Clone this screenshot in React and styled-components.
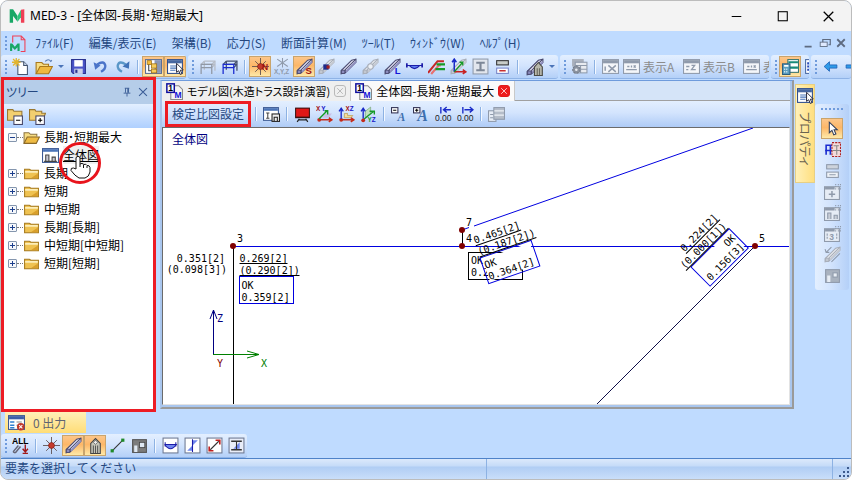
import React, { useState } from "react";
import styled, { createGlobalStyle } from "styled-components";

const gray = "#8f9aab";

const bar = (light, mid, dark) => (
  <>
    <path d="M1 12 L11 2 L15 1 L15 4 L5 14 L1 15 Z" fill={light} stroke={dark} strokeWidth="1" />
    <path d="M5 14 L5 11 L15 1" fill="none" stroke={dark} strokeWidth="1" />
    <path d="M5.6 13 L15 3.5" stroke={mid} strokeWidth="1.6" />
    <rect x="1.5" y="11.5" width="3" height="3" fill={mid} stroke={dark} strokeWidth=".8" />
  </>
);
const steel = bar("#e4e4f4", "#8d8dbd", "#4a4a70");
const faded = bar("#e6e9ee", "#c3c8d1", "#a7adb8");

const frame = (front, back) => (
  <g fill="none" strokeWidth="1.2">
    <path d="M5 3 H15 V12 M5 3 V11" stroke={back} />
    <path d="M2 6 L5 3 M12 6 L15 3 M12 9 L15 6 M5 6 H15" stroke={back} />
    <path d="M2 15 V6 H12 V15 M2 9 H12" stroke={front} />
  </g>
);

const grid = (stroke) => (
  <>
    <rect x=".5" y="1.5" width="15" height="13" fill="#f4f6f9" stroke={stroke} />
    <rect x="1" y="2" width="14" height="3" fill={stroke} />
  </>
);

const node = (
  <>
    <path d="M8 0 V16 M0 8 H16 M3 3 L13 13 M13 3 L3 13" stroke="#5a4a4a" strokeWidth=".8" />
    <circle cx="8" cy="8" r="2.8" fill="#c43a2c" stroke="#7d1a10" strokeWidth=".6" />
  </>
);

const axis = (plane, a, b) => (
  <>
    <path d="M2 13 H14 M12 11 L15 13 L12 15" fill="none" stroke="#c42a1a" strokeWidth="1.3" />
    <circle cx="3" cy="13" r="1.8" fill="#c42a1a" />
    {plane}
    <text x={a[1]} y="5" fontSize="6" fontWeight="700" fill="#a01010">{a[0]}</text>
    <text x={b[1]} y="5" fontSize="6" fontWeight="700" fill="#1414c8">{b[0]}</text>
  </>
);

const icons = {
  newFile: (
    <>
      <path d="M5.5 3.5 H11 L14.5 7 V15.5 H5.5 Z" fill="#fff" stroke="#44556f" />
      <path d="M11 3.5 V7 H14.5" fill="#c8d6ea" stroke="#44556f" />
      <path d="M4 0 V8 M0 4 H8 M1 1 L7 7 M7 1 L1 7" stroke="#e3b52c" strokeWidth="1.2" />
    </>
  ),
  open: (
    <>
      <path d="M1 14 V4 H6 L7.5 5.5 H12 V8" fill="#f7dd83" stroke="#a9791d" />
      <path d="M1 14 L4.5 7.5 H15.5 L12 14 Z" fill="#efb93f" stroke="#a9791d" />
      <path d="M9 3 Q12 0 14 3 L15 2" fill="none" stroke="#5a7db5" />
    </>
  ),
  save: (
    <>
      <path d="M1.5 1.5 H14.5 V14.5 H3 L1.5 13 Z" fill="#4a55c8" stroke="#2a3390" />
      <rect x="4" y="2" width="8" height="6" fill="#fff" />
      <rect x="4" y="10" width="8" height="5" fill="#c9d0ea" />
      <rect x="5" y="11" width="2" height="3" fill="#2a3390" />
    </>
  ),
  undo: (
    <>
      <path d="M5 6 Q11 2 12.5 7 Q13 10.5 8.5 13" fill="none" stroke="#4b74c9" strokeWidth="2.2" />
      <path d="M1.5 4 L3 11 L8 7 Z" fill="#4b74c9" />
    </>
  ),
  redo: (
    <>
      <path d="M11 6 Q5 2 3.5 7 Q3 10.5 7.5 13" fill="none" stroke="#5a97c8" strokeWidth="2.2" />
      <path d="M14.5 3 L14 10 L8 8 Z" fill="#3f72b8" />
    </>
  ),
  treePane: (
    <>
      <rect x=".5" y="1.5" width="15" height="13" fill="#fff" stroke="#5b6f94" />
      <rect x="9" y="2" width="6" height="12" fill="#8a97b5" />
      <path d="M3.5 3 V12 H6" fill="none" stroke="#444" />
      <rect x="2" y="2.5" width="4" height="3.5" fill="#f0b93a" stroke="#9c6c12" strokeWidth=".7" />
      <rect x="6" y="5.5" width="5" height="4" fill="#f5cd5c" stroke="#9c6c12" strokeWidth=".7" />
      <rect x="6" y="10.5" width="5" height="3.5" fill="#f5cd5c" stroke="#9c6c12" strokeWidth=".7" />
    </>
  ),
  propPane: (
    <>
      <rect x=".5" y="1.5" width="14" height="13" fill="#fff" stroke="#2f4f8f" />
      <rect x="1" y="2" width="13" height="3" fill="#47679f" />
      <path d="M3 7.5 H10 M3 9.5 H9 M3 11.5 H8" stroke="#4472b8" />
      <path d="M9 5 L9 13.5 L11 12 L12.5 15.5 L14 14.8 L12.6 11.5 L15.3 11.3 Z" fill="#fff" stroke="#223" strokeWidth=".9" />
    </>
  ),
  frameOff: frame("#9098a5", "#b6bcc6"),
  frameOn: frame("#1a2bd0", "#44506e"),
  nodeN: (
    <>
      {node}
      <text x="9.5" y="11" fontSize="8" fontWeight="700" fill="#a01010">N</text>
    </>
  ),
  node,
  nodeXyz: (
    <>
      <path d="M8 0 V9 M3 1 L13 8 M13 1 L3 8" stroke={gray} />
      <text x="0" y="15" fontSize="6" fontWeight="700" fill={gray}>X,Y,Z</text>
    </>
  ),
  barS: (
    <>
      {steel}
      <text x="9" y="15" fontSize="9" fontWeight="700" fill="#a01010">S</text>
    </>
  ),
  barMid: (
    <>
      {faded}
      <rect x="5" y="6" width="5" height="5" fill="#1c2a8c" />
      <rect x="8" y="7" width="3" height="3" fill="#a02020" />
    </>
  ),
  bar: steel,
  barJoint: (
    <>
      {faded}
      <circle cx="8" cy="8" r="2.6" fill="#edf0f5" stroke="#a7adb8" />
    </>
  ),
  barL: (
    <>
      {steel}
      <text x="10" y="15" fontSize="9" fontWeight="700" fill="#1414d8">L</text>
    </>
  ),
  load: (
    <>
      <path d="M.8 5 V9 M15.2 5 V9" stroke="#1c1ca8" strokeWidth="1.6" />
      <path d="M0 7 H16" stroke="#1c1ca8" />
      <path d="M3 7 Q8 13 13 7 Z" fill="#5c7df0" stroke="#1c1ca8" />
    </>
  ),
  beams: (
    <>
      <path d="M0 14 L9 3 H15" fill="none" stroke="#c82828" strokeWidth="2" />
      <path d="M3 15 L10 7 H12" fill="none" stroke="#e87070" strokeWidth="2" />
      <path d="M8 6 H16 M7 10.5 H16" stroke="#169a28" strokeWidth="2.2" />
    </>
  ),
  localAxis: (
    <>
      {faded}
      <path d="M4 13 V2 M2 4 L4 1 L6 4" fill="none" stroke="#1a2bc8" strokeWidth="1.4" />
      <path d="M4 13 H14 M12 11 L15 13 L12 15" fill="none" stroke="#c82020" strokeWidth="1.4" />
      <path d="M4 13 L12 4 M9 4 H12 V7" fill="none" stroke="#169a28" strokeWidth="1.2" />
    </>
  ),
  section: (
    <>
      <rect x="1" y="1" width="14" height="14" fill="#e2e6ed" stroke={gray} />
      <path d="M4 4.5 H12 M4 11.5 H12 M8 4.5 V11.5" stroke="#7d8797" strokeWidth="2" />
    </>
  ),
  plates: (
    <>
      <rect x="2.5" y="2.5" width="11" height="4" fill="#c8ccc8" stroke="#333" />
      <rect x="2.5" y="9.5" width="11" height="5" fill="#fff" stroke="#7885c8" />
      <path d="M5 12 H11" stroke="#c83030" strokeWidth="1.2" />
    </>
  ),
  platesOff: (
    <>
      <rect x="2.5" y="2.5" width="11" height="4" fill="#cdd3dc" stroke={gray} />
      <rect x="2.5" y="9.5" width="11" height="5" fill="#eef2f7" stroke={gray} />
      <path d="M5 12 H11" stroke={gray} />
    </>
  ),
  barWall: (
    <>
      {steel}
      <path d="M7.5 15.5 V8 L11 4 L14.5 8 V15.5 Z" fill="#b8b8ac" stroke="#4a4a44" />
      <path d="M10 15 V9 M12 15 V9" stroke="#6a6a60" />
    </>
  ),
  gearGrid: (
    <>
      <rect x="1" y="1" width="11" height="7" fill="#a9b0bc" />
      <rect x="4" y="4" width="11" height="10" fill="#e8ebf0" stroke={gray} />
      <path d="M4 7 H15 M9 7 V14 M4 10.5 H15" stroke={gray} />
      <circle cx="5" cy="11" r="3.4" fill="#8b93a0" stroke="#737b89" strokeDasharray="2 1" />
      <circle cx="5" cy="11" r="1.2" fill="#e8ebf0" />
    </>
  ),
  gridX: (
    <>
      {grid(gray)}
      <path d="M3 8 V12 M6 7 L13 13 M13 7 L6 13" stroke={gray} strokeWidth="1.4" />
    </>
  ),
  gridA: (
    <>
      {grid(gray)}
      <path d="M3 11 H13 M4 8 H6 M8 7 V9 M10 7 L12 9 M12 7 L10 9" stroke={gray} strokeWidth="1.2" />
    </>
  ),
  gridB: (
    <>
      {grid(gray)}
      <path d="M3 8 H6 M8 7 H11 L8 11 H12 M3 11 H5" fill="none" stroke={gray} strokeWidth="1.2" />
    </>
  ),
  calc: (
    <>
      <rect x="5.5" y="1.5" width="10" height="12" fill="#fff" stroke="#38756e" />
      <path d="M6 4 H15 M6 9 H15" stroke="#188a78" strokeWidth="2" />
      <rect x=".5" y="5.5" width="7" height="10" fill="#5c9fc0" stroke="#2c5e80" />
      <path d="M2 7.5 H6" stroke="#fff" strokeWidth="1.6" />
      <path d="M2 10.5 H6 M2 13 H6" stroke="#e0f0f8" strokeDasharray="1 1" strokeWidth="1.4" />
    </>
  ),
  sheet: (
    <>
      <rect x="1.5" y="1.5" width="13" height="13" fill="#fff" stroke="#4b6ba5" />
      <path d="M4 4 V13" stroke="#2a49b8" strokeWidth="2" strokeDasharray="2 1" />
    </>
  ),
  back: <path d="M2 8 L7 3.5 V6.5 H14 V9.500 H7 V12.500 Z" fill="#2f9be8" stroke="#1b62b8" strokeWidth=".8" />,
  forward: <path d="M14 8 L9 3.5 V6.5 H2 V9.500 H9 V12.500 Z" fill="#2f9be8" stroke="#1b62b8" strokeWidth=".8" />,
  folder: (
    <>
      <path d="M1.5 13 V4 H6 L7.5 5 H14.5 V13 Z" fill="#efc251" stroke="#a67a1c" />
      <path d="M2 6.5 H14" stroke="#fdeeb8" strokeWidth="1.6" />
      <path d="M8 12 L14 8 V12.5 H8 Z" fill="#d99f2c" />
    </>
  ),
  folderOpen: (
    <>
      <path d="M1 13.5 V3.5 H5.5 L7 5 H13 V7" fill="#f7dd83" stroke="#8c7440" />
      <path d="M1 13.5 L4 7.5 H15.5 L12.5 13.5 Z" fill="#eebb44" stroke="#8c6a28" />
    </>
  ),
  collapse: (
    <>
      <path d="M.5 11.5 V1.5 H5.5 L6.5 3 H14 V11.5 Z" fill="#f2cf70" stroke="#9a7830" />
      <rect x="6.5" y="7.5" width="8" height="8" fill="#fff" stroke="#446" />
      <path d="M8.5 11.5 H12.5" stroke="#000" />
    </>
  ),
  expand: (
    <>
      <path d="M.5 11.5 V1.5 H5.5 L6.5 3 H12 V5 H15.5 L13 11.5 Z" fill="#f2cf70" stroke="#9a7830" />
      <rect x="6.5" y="7.5" width="8" height="8" fill="#fff" stroke="#446" />
      <path d="M8.5 11.5 H12.5 M10.5 9.5 V13.5" stroke="#000" />
    </>
  ),
  chart: (
    <>
      <rect x=".5" y="1.5" width="15" height="13" fill="#fff" stroke="#3c5a94" />
      <rect x="1" y="2" width="14" height="2.5" fill="#4b74b8" />
      <path d="M3.5 13 V7.5 H6.5 V13 M9.5 13 V9.5 H12.5 V13 M2 13.5 H14" fill="#c8c8d4" stroke="#444" />
    </>
  ),
  chartOff: (
    <>
      <rect x=".5" y="3.5" width="14" height="12" fill="#e6ecf5" stroke={gray} />
      <path d="M1 5 H10" stroke={gray} strokeWidth="2.4" />
      <path d="M11 1 V6 M13.5 1 V6 M15.5 1 V6" stroke={gray} strokeDasharray="1 1" />
      <path d="M3.5 14 V8.5 H6.5 V14 M9.5 14 V10.5 H12.5 V14" fill="#c8cdd6" stroke={gray} />
    </>
  ),
  addOff: (
    <>
      <rect x=".5" y="3.5" width="14" height="12" fill="#e6ecf5" stroke={gray} />
      <path d="M1 5 H10" stroke={gray} strokeWidth="2.4" />
      <path d="M11 1 V6 M13.5 1 V6 M15.5 1 V6" stroke={gray} strokeDasharray="1 1" />
      <path d="M7.5 7.5 V13.5 M4.5 10.5 H10.5" stroke={gray} strokeWidth="1.4" />
    </>
  ),
  numOff: (
    <>
      <rect x=".5" y="3.5" width="14" height="12" fill="#e6ecf5" stroke={gray} />
      <path d="M1 5 H10" stroke={gray} strokeWidth="2.4" />
      <path d="M11 1 V6 M13.5 1 V6 M15.5 1 V6" stroke={gray} strokeDasharray="1 1" />
      <text x="5" y="14" fontSize="8" fontWeight="700" fill={gray}>3</text>
      <path d="M3 8 V14 M12 8 V14" stroke={gray} strokeDasharray="2 1" />
    </>
  ),
  barsOff: (
    <>
      {faded}
      <path d="M7 15 L15 7 M2 6 L7 1 M1 3 L2 6 L5 6" fill="none" stroke={gray} />
    </>
  ),
  wallOff: (
    <>
      <rect x="1.5" y="2.5" width="13" height="12" fill="#a9b2bf" stroke={gray} />
      <rect x="8.5" y="5.5" width="4" height="4" fill="#e8edf4" stroke={gray} />
      <path d="M3 14 V8 H6 V14" fill="#e8edf4" />
    </>
  ),
  wall: (
    <>
      <rect x="1.5" y="2.5" width="13" height="12" fill="#7c7c7c" stroke="#555" />
      <rect x="8" y="5" width="5" height="5" fill="#dfe8f2" stroke="#444" strokeWidth=".8" />
      <path d="M3 14 V8 H6 V14" fill="#dfe8f2" />
    </>
  ),
  viewSet: (
    <>
      <rect x=".5" y="1.5" width="14" height="12" fill="#fff" stroke="#3c5a94" />
      <rect x="1" y="2" width="13" height="2.5" fill="#4b74b8" />
      <path d="M4.5 6 V12 M3 6.5 H6 M3 11.5 H6" stroke="#444" />
      <rect x="8.5" y="7.5" width="7" height="7" fill="#eee" stroke="#222" />
      <path d="M10.5 14 V10.5 H13.5 V14" fill="none" stroke="#222" />
    </>
  ),
  monitor: (
    <>
      <rect x="1" y="1.5" width="14" height="10" fill="#3a1010" />
      <rect x="2" y="2.5" width="12" height="7.5" fill="#e01818" />
      <path d="M5 12 L3 15 M11 12 L13 15 M4 13 H12" stroke="#222" strokeWidth="1.2" />
    </>
  ),
  axisXy: axis(
    <>
      <path d="M6 11 L9 7 H15 L12 11 Z" fill="#c9bfe8" />
      <path d="M3 12 L10 5 M8 4.5 H11 V8" fill="none" stroke="#169a28" strokeWidth="1.3" />
    </>,
    ["X", 0],
    ["Y", 5]
  ),
  axisXz: axis(
    <>
      <path d="M6 11 V7 H9 V9 H14 L12 11 Z" fill="#f3dc9c" stroke="#b8933c" strokeWidth=".6" />
      <path d="M3 12 V3 M1 5 L3 2 L5 5" fill="none" stroke="#1a2bc8" strokeWidth="1.3" />
    </>,
    ["X", 7],
    ["Z", 11]
  ),
  axisYz: (
    <>
      <path d="M5 11 V5 L10 1 V7 Z" fill="#bfe0bf" stroke="#70a070" strokeWidth=".6" />
      <path d="M3 12 V3 M1 5 L3 2 L5 5" fill="none" stroke="#1a2bc8" strokeWidth="1.3" />
      <path d="M3 13 L13 5 M9 5 H13.5 V8" fill="none" stroke="#169a28" strokeWidth="1.3" />
      <circle cx="3" cy="13.5" r="1.8" fill="#c42a1a" />
      <text x="7" y="15" fontSize="6" fontWeight="700" fill="#169a28">Y</text>
      <text x="11" y="15" fontSize="6" fontWeight="700" fill="#1414c8">Z</text>
    </>
  ),
  fontDown: (
    <>
      <text x="6" y="14" fontSize="11" fontWeight="700" fontStyle="italic" fontFamily="Liberation Serif, serif" fill="#3e6fae">A</text>
      <rect x=".5" y="1.5" width="6" height="5" fill="#fff" stroke="#335" />
      <path d="M2 4 H5" stroke="#000" />
    </>
  ),
  fontUp: (
    <>
      <text x="4" y="14" fontSize="15" fontWeight="700" fontStyle="italic" fontFamily="Liberation Serif, serif" fill="#3e6fae">A</text>
      <rect x=".5" y="1.5" width="6" height="5" fill="#fff" stroke="#335" />
      <path d="M2 4 H5 M3.5 2.5 V5.5" stroke="#000" />
    </>
  ),
  digitsLess: (
    <>
      <path d="M5.5 1 V7 M8 3.5 H15 M11 1 L8 3.5 L11 6" fill="none" stroke="#1a2bc8" strokeWidth="1.3" />
      <text x="0" y="14" fontSize="8" fill="#222">0.00</text>
    </>
  ),
  digitsMore: (
    <>
      <path d="M5.5 1 V7 M7 3.5 H15 M12 1 L15 3.5 L12 6" fill="none" stroke="#1a2bc8" strokeWidth="1.3" />
      <text x="0" y="14" fontSize="8" fill="#222">0.00</text>
    </>
  ),
  listOff: (
    <>
      <rect x=".5" y="4.5" width="7" height="10" fill="#e6ecf5" stroke={gray} />
      <rect x="5.5" y="1.5" width="10" height="11" fill="#b5bdc9" stroke={gray} />
      <path d="M6 4.5 H15 M6 8.5 H15" stroke="#edf1f6" strokeWidth="1.2" />
      <path d="M2 8 H5 M2 11 H5" stroke={gray} />
    </>
  ),
  pointer: (
    <path d="M5 2 V12 L7.5 9.8 L9.2 14 L11.2 13.200 L9.500 9.200 H12.500 Z" fill="#fff" stroke="#33405c" />
  ),
  selectFrame: (
    <>
      <path d="M2 13 V4 H9 M1 9 H9 M6 4 V13" fill="none" stroke="#1a2bd0" strokeWidth="1.5" />
      <rect x="7.5" y="1.5" width="8" height="13" fill="#f3dada" stroke="#b02020" strokeDasharray="2 1" />
      <path d="M8 9 H15 M9 4.5 H14 M12 4 V13" stroke="#888" />
    </>
  ),
  output: (
    <>
      <rect x=".5" y="1.5" width="15" height="13" fill="#fff" stroke="#3c5a94" />
      <rect x="1" y="2" width="14" height="3" fill="#3c5fa8" />
      <path d="M2 7.5 H6 M2 10.5 H6 M2 13 H6" stroke="#2f7fd0" strokeWidth="1.4" />
      <path d="M8 7.5 H13 M8 10.5 H13" stroke="#888" />
      <circle cx="12" cy="12" r="3.6" fill="#c0392b" />
      <path d="M10.5 10.5 L13.5 13.5 M13.5 10.5 L10.5 13.5" stroke="#fff" />
    </>
  ),
  all: (
    <>
      <text x="0" y="7" fontSize="8" fontWeight="700" fill="#000">ALL</text>
      <path d="M1 14 L6 8 M3 15 L8 9 M1 14 L3 15" stroke="#667" strokeWidth="1.4" />
      <path d="M12.5 7 V14 M10 11 L12.5 14 L15 11 M10 15.5 H15" fill="none" stroke="#a01818" strokeWidth="1.3" />
    </>
  ),
  house: (
    <>
      <path d="M3.5 15.5 V6 L8 1.5 L12.5 6 V15.5 Z" fill="#c4c4b8" stroke="#444" />
      <path d="M6 15 V8 M8 15 V8 M10 15 V8" stroke="#555" />
      <path d="M8 3 L10 5 L8 7 L6 5 Z" fill="#eee" stroke="#555" strokeWidth=".7" />
    </>
  ),
  line: (
    <>
      <path d="M3 13 L13 3" stroke="#333" />
      <rect x="1.5" y="11.5" width="3" height="3" fill="#1f8a2a" />
      <rect x="11.5" y="1.5" width="3" height="3" fill="#1f8a2a" />
    </>
  ),
  moment: (
    <>
      <rect x="1" y="1" width="14" height="14" fill="#fff" stroke="#6f7a94" />
      <path d="M3 5 V9 M13 5 V9" stroke="#1c1ca8" />
      <path d="M2.5 7 H13.5 Q8 15 2.5 7" fill="#6f86ee" stroke="#1c1ca8" />
    </>
  ),
  shear: (
    <>
      <rect x="1" y="1" width="14" height="14" fill="#fff" stroke="#6f7a94" />
      <path d="M8 3 H13 L8 8 Z M8 8 L3 13 H8 Z" fill="#6f86ee" />
      <path d="M8 2 V14" stroke="#1c1ca8" />
    </>
  ),
  axial: (
    <>
      <rect x="1" y="1" width="14" height="14" fill="#fff" stroke="#6f7a94" />
      <path d="M4 12 L12 4" stroke="#333" />
      <path d="M3 9 V13 H7 M13 7 V3 H9" fill="none" stroke="#c02020" strokeWidth="1.5" />
    </>
  ),
  steelBox: (
    <>
      <rect x="1" y="1" width="14" height="14" fill="#e9edf8" stroke="#6f7a94" />
      <path d="M3 4 H13 M3 12 H13" stroke="#333" strokeWidth="1.6" />
      <path d="M11 5 L5 11 H11 Z" fill="#6f86ee" />
      <path d="M8 4 V12" stroke="#333" />
    </>
  ),
  appLogo: (
    <>
      <path d="M1.5 2 H4.5 L8.5 8 V13 L4.5 8 V14 H1.5 Z" fill="#17a765" />
      <path d="M8.5 8 L11.5 2.500 V9 L8.5 13 Z" fill="#2bc47c" />
      <path d="M11.5 2.500 L14.5 2 V14 H11.5 Z" fill="#ef3f55" />
    </>
  ),
  docLogo: (
    <>
      <path d="M3.5 7 V1 H11.5 L15 4.5 V15.5 H11" fill="none" stroke="#ef3f55" />
      <path d="M11.5 1 V4.5 H15" fill="none" stroke="#ef3f55" />
      <path d="M1 8 H3 L5.5 11 L8 8 H10 V15 H8 V11.5 L5.5 14 L3 11.5 V15 H1 Z" fill="#17a765" />
    </>
  ),
  docTab: (
    <>
      <path d="M4.5 2.5 H12 L15.5 6 V15.5 H4.5 Z" fill="#f4f4f4" stroke="#888" />
      <rect x="0.8" y=".8" width="7" height="8" fill="#fff" stroke="#10109c" strokeWidth="1.4" />
      <text x="2" y="7.6" fontSize="8" fontWeight="700" fill="#000">1</text>
      <text x="8" y="14.500" fontSize="8" fontWeight="700" fill="#1414d8">M</text>
    </>
  ),
  pin: <path d="M5 3 H11 M6 3 V9 M10 3 V9 M9 3 V9 M3.5 9.5 H12.5 M8 9.5 V14" stroke="#3a5c96" strokeWidth="1.2" />,
  cross: <path d="M3.5 3.5 L12.5 12.5 M12.5 3.5 L3.5 12.5" stroke="currentColor" strokeWidth="1.2" />,
  minimize: <path d="M3.500 8 H12.500" stroke="currentColor" />,
  maximize: <rect x="4" y="3.5" width="8.500" height="8.500" fill="none" stroke="currentColor" />,
  mdiMin: <path d="M3 12 H11" stroke="#5e6b80" strokeWidth="2" />,
  mdiRestore: (
    <>
      <path d="M5.5 8 V4 H14 V10 H12" fill="none" stroke="#5e6b80" strokeWidth="1.4" />
      <rect x="2.5" y="7" width="8" height="5" fill="#dfeaff" stroke="#5e6b80" />
    </>
  ),
  mdiClose: <path d="M3 3 L13 13 M13 3 L3 13" stroke="#5e6b80" strokeWidth="2.4" />,
};

function Icon({ name, size = 17 }) {
  return (
    <IconSvg width={size} height={size} viewBox="0 0 16 16" aria-hidden="true">
      {icons[name]}
    </IconSvg>
  );
}

// "|" is a separator, a leading "*" marks a pressed button
function Tools({ items }) {
  return items.map((item, i) => {
    if (item === "|") return <Separator key={i} />;
    const on = item.startsWith("*");
    const name = on ? item.slice(1) : item;
    return (
      <ToolButton key={i} type="button" aria-label={name} aria-pressed={on} $on={on}>
        <Icon name={name} />
      </ToolButton>
    );
  });
}

function DropTool({ name }) {
  return (
    <DropButton type="button" aria-label={name}>
      <Icon name={name} size={18} />
      <Caret />
    </DropButton>
  );
}

const menus = [
  "ﾌｧｲﾙ(F)",
  "編集/表示(E)",
  "架構(B)",
  "応力(S)",
  "断面計算(M)",
  "ﾂｰﾙ(T)",
  "ｳｨﾝﾄﾞｳ(W)",
  "ﾍﾙﾌﾟ(H)",
];

const closedFolders = ["長期", "短期", "中短期", "長期[長期]", "中短期[中短期]", "短期[短期]"];

// Ratios of one member end, drawn along the member direction
function RatioLabel({ x, y, angle = 0, bending, shear, total, end, line = "#0000e0" }) {
  const at = end ? 54 : 0;
  const anchor = end ? "end" : "start";
  return (
    <g transform={`translate(${x} ${y}) rotate(${angle})`}>
      <rect x="2" y="2" width="50" height="23" fill="#fff" />
      <rect x="0" y="0" width="54" height="27" fill="none" stroke={line} />
      <text x={at} y="-15" textAnchor={anchor}>{bending}</text>
      <text x={at} y="-3" textAnchor={anchor}>{shear}</text>
      <path d={end ? "M6 -13 H54 M-6 -1 H54" : "M0 -13 H48 M0 -1 H60"} stroke="#000" />
      <text x={end ? 52 : 2} y="12" textAnchor={anchor}>OK</text>
      <text x={end ? 52 : 2} y="24" textAnchor={anchor}>{total}</text>
    </g>
  );
}

function Node({ x, y, label, dx = 4, dy = -4 }) {
  return (
    <>
      <circle cx={x} cy={y} r="3" fill="#800000" />
      <text x={x + dx} y={y + dy}>{label}</text>
    </>
  );
}

function Diagram() {
  return (
    <Drawing>
      <text className="title" x="9" y="16">全体図</text>
      <path d="M70 118.5 H4000" stroke="#0000e0" />
      <path d="M70.5 118 V2000" stroke="#000" />
      <path d="M299.5 102 V118" stroke="#000" />
      <path d="M299 102 L306 99.5 M311 98 L590 0" stroke="#0000e0" />
      <path d="M592 118 L434 276 L234 476" stroke="#101048" />

      <rect x="305.5" y="124.5" width="54" height="27" fill="none" stroke="#000" />
      <text x="308" y="136">OK</text>
      <text x="308" y="148">0.2</text>

      <text x="62" y="134" textAnchor="end">0.351[2]</text>
      <text x="64" y="145" textAnchor="end">(0.098[3])</text>
      <RatioLabel x={76.5} y={148.5} bending="0.269[2]" shear="(0.290[2])" total="0.359[2]" />
      <RatioLabel x={317} y={130} angle={-19} bending="0.465[2]" shear="(0.187[2])" total="0.364[2]" />
      <RatioLabel x={528} y={139} angle={-45} bending="0.224[2]" shear="(0.000[1])" total="0.156[3]" end />

      <Node x={70} y={118} label="3" />
      <Node x={299} y={102} label="7" />
      <Node x={299} y={118} label="4" />
      <Node x={592} y={118} label="5" />

      <g fill="none">
        <path d="M50.5 226 V182 M47 191 L50.5 182 L54 191" stroke="#000080" />
        <path d="M50 226.5 H96 M84 223 L96 226.5 L84 230" stroke="#008000" />
      </g>
      <text x="54" y="194" fill="#000080">Z</text>
      <text x="54" y="239" fill="#800000">Y</text>
      <text x="98" y="239" fill="#008000">X</text>
    </Drawing>
  );
}

function TreePanel() {
  const [open, setOpen] = useState(true);
  return (
    <Panel>
      <PanelHeader>
        <h2>ツリー</h2>
        <PlainButton type="button" aria-label="pin"><Icon name="pin" size={12} /></PlainButton>
        <PlainButton type="button" aria-label="close"><Icon name="cross" size={14} /></PlainButton>
      </PanelHeader>
      <PanelTools>
        <Tools items={["collapse", "expand"]} />
      </PanelTools>
      <TreeList>
        <TreeRow>
          <Expander type="button" aria-label="toggle" $open={open} onClick={() => setOpen(!open)} />
          <Dots />
          <Icon name="folderOpen" />
          <span>長期･短期最大</span>
        </TreeRow>
        {open && (
          <TreeRow $child>
            <Icon name="chart" />
            <Selected>
              全体図
              <Pointer width="46" height="46" viewBox="0 0 46 46" aria-hidden="true">
                <circle cx="23" cy="23" r="19.5" fill="none" stroke="#e8141c" strokeWidth="3" />
                <path
                  d="M19 29 V17.500 Q21 15 23 17.500 V24 Q25 22.500 27 24.500 Q29 23.500 30 25.500 Q32.500 25 33 27.500 V32 Q32 37 28 38 H22 Q18 36 14 30.500 Q13.500 27.500 16.500 28 Z"
                  fill="#fff"
                  stroke="#111"
                />
                <path d="M23 24 V27 M26.500 25 V28 M30 26 V28" stroke="#111" />
              </Pointer>
            </Selected>
          </TreeRow>
        )}
        {closedFolders.map((name) => (
          <TreeRow key={name}>
            <Expander type="button" aria-label="toggle" />
            <Dots />
            <Icon name="folder" />
            <span>{name}</span>
          </TreeRow>
        ))}
      </TreeList>
    </Panel>
  );
}

export default function App() {
  return (
    <Window>
      <GlobalStyle />
      <TitleBar>
        <Icon name="appLogo" size={18} />
        <h1>MED-3 - [全体図-長期･短期最大]</h1>
        <CaptionButton type="button" aria-label="minimize"><Icon name="minimize" /></CaptionButton>
        <CaptionButton type="button" aria-label="maximize"><Icon name="maximize" /></CaptionButton>
        <CaptionButton type="button" aria-label="close"><Icon name="cross" /></CaptionButton>
      </TitleBar>

      <MenuBar>
        <Grip />
        <Icon name="docLogo" />
        <MenuItems>
          {menus.map((label) => (
            <MenuButton key={label} type="button">{label}</MenuButton>
          ))}
        </MenuItems>
        <PlainButton type="button" aria-label="minimize document"><Icon name="mdiMin" size={14} /></PlainButton>
        <PlainButton type="button" aria-label="restore document"><Icon name="mdiRestore" size={14} /></PlainButton>
        <PlainButton type="button" aria-label="close document"><Icon name="mdiClose" size={12} /></PlainButton>
      </MenuBar>

      <ToolRow>
        <ToolBar>
          <Grip />
          <Tools items={["newFile"]} />
          <DropTool name="open" />
          <Tools items={["save", "undo", "redo", "|", "*treePane", "*propPane"]} />
        </ToolBar>
        <ToolBar>
          <Grip />
          <Tools
            items={[
              "frameOff", "frameOn", "|", "*nodeN", "nodeXyz", "*barS", "barMid", "bar", "barJoint",
              "barL", "load", "beams", "localAxis", "section", "plates", "|",
            ]}
          />
          <DropTool name="barWall" />
        </ToolBar>
        <ToolBar $grow>
          <Grip />
          <Tools items={["gearGrid", "|", "gridX"]} />
          <LabelButton type="button" disabled><Icon name="gridA" />表示A</LabelButton>
          <LabelButton type="button" disabled><Icon name="gridB" />表示B</LabelButton>
          <LabelButton type="button" disabled><Icon name="gridA" />表</LabelButton>
        </ToolBar>
        <ToolBar $width={38}>
          <Grip />
          <Tools items={["*calc", "sheet"]} />
        </ToolBar>
        <ToolBar $width={40}>
          <Grip />
          <Tools items={["back", "forward"]} />
        </ToolBar>
      </ToolRow>

      <Workspace>
        <TreePanel />
        <Document>
          <Tabs>
            <Tab $compact>
              <Icon name="docTab" />
              <span>モデル図(木造トラス設計演習)</span>
              <TabClose type="button" aria-label="close tab"><Icon name="cross" size={10} /></TabClose>
            </Tab>
            <Tab $active>
              <Icon name="docTab" />
              <span>全体図-長期･短期最大</span>
              <TabClose type="button" aria-label="close tab" $active><Icon name="cross" size={10} /></TabClose>
            </Tab>
          </Tabs>
          <DocTools>
            <SettingButton type="button">検定比図設定</SettingButton>
            <Tools
              items={[
                "|", "viewSet", "|", "monitor", "axisXy", "axisXz", "axisYz", "|",
                "fontDown", "fontUp", "digitsLess", "digitsMore", "|", "listOff",
              ]}
            />
          </DocTools>
          <Canvas>
            <Diagram />
          </Canvas>
        </Document>
        <RightSide>
          <SideTab type="button">
            <Icon name="propPane" />
            <span>プロパティ</span>
          </SideTab>
          <SideTools>
            <SideGrip />
            <Tools
              items={[
                "*pointer", "selectFrame", "platesOff", "addOff", "chartOff", "numOff", "barsOff", "wallOff",
              ]}
            />
          </SideTools>
        </RightSide>
      </Workspace>

      <OutputTab type="button">
        <Icon name="output" />
        <span>0 出力</span>
      </OutputTab>

      <ToolRow>
        <ToolBar>
          <Grip />
          <Tools
            items={["all", "|", "node", "*bar", "*house", "line", "wall", "|", "moment", "shear", "axial", "steelBox"]}
          />
        </ToolBar>
      </ToolRow>

      <StatusBar>
        <p>要素を選択してください</p>
        <p />
        <SizeGrip width="12" height="12" viewBox="0 0 12 12" aria-hidden="true">
          <path
            d="M8 0 H10 V2 H8 Z M4 4 H6 V6 H4 Z M8 4 H10 V6 H8 Z M0 8 H2 V10 H0 Z M4 8 H6 V10 H4 Z M8 8 H10 V10 H8 Z"
            fill="#3d5a8c"
          />
        </SizeGrip>
      </StatusBar>
    </Window>
  );
}

const GlobalStyle = createGlobalStyle`
  * {
    box-sizing: border-box;
  }
  body {
    margin: 0;
    background: #fff;
    font-family: "Noto Sans CJK JP", sans-serif;
    font-size: 12px;
    line-height: 18px;
  }
  h1, h2, p, ul {
    margin: 0;
    padding: 0;
    font-size: 12px;
    font-weight: 400;
  }
  button {
    margin: 0;
    padding: 0;
    border: 0;
    background: none;
    color: inherit;
    font: inherit;
    white-space: nowrap;
  }
`;

const IconSvg = styled.svg`
  display: block;
  flex: none;
  font-family: "Liberation Sans", sans-serif;
`;

const Window = styled.div`
  display: flex;
  flex-direction: column;
  min-height: 100vh;
  border: 1px solid #bcbcbc;
  border-radius: 8px;
  overflow: hidden;
  background: #bfdbff;
`;

const TitleBar = styled.header`
  display: flex;
  align-items: center;
  height: 30px;
  padding-left: 7px;
  background: #f3f3f3;
  color: #000;
  h1 {
    flex: 1;
    margin-left: 4px;
    font-family: "Noto Sans", "Noto Sans CJK JP", sans-serif;
  }
`;

const CaptionButton = styled.button`
  display: flex;
  align-items: center;
  justify-content: center;
  width: 46px;
  height: 30px;
`;

const PlainButton = styled.button`
  display: flex;
  align-items: center;
  justify-content: center;
  width: 16px;
  height: 16px;
  color: #3a5c96;
`;

const MenuBar = styled.nav`
  display: flex;
  align-items: center;
  height: 24px;
  padding-right: 2px;
  background: #bfdbff;
`;

const MenuItems = styled.div`
  display: flex;
  flex: 1;
  margin-left: 2px;
`;

const MenuButton = styled.button`
  padding: 0 8px 0 7px;
  color: #24477f;
`;

const ToolRow = styled.div`
  display: flex;
  gap: 2px;
`;

const ToolBar = styled.div`
  display: flex;
  align-items: center;
  flex: ${({ $grow, $width }) => ($grow ? "1 1 0" : `0 0 ${$width ? `${$width}px` : "auto"}`)};
  min-width: 0;
  height: 24px;
  overflow: hidden;
  border-bottom: 1px solid #8fb3e6;
  border-radius: 3px;
  background: linear-gradient(#e3efff, #d3e4fd 45%, #b4d0f8);
`;

const Grip = styled.span`
  flex: none;
  width: 2px;
  height: 14px;
  margin: 0 2px 0 4px;
  background: repeating-linear-gradient(#6f9bdc 0 2px, transparent 2px 4px);
`;

const Separator = styled.span`
  flex: none;
  width: 1px;
  height: 14px;
  margin: 0 4px;
  background: #8db2e3;
  box-shadow: 1px 0 #f3f8ff;
`;

const ToolButton = styled.button`
  display: flex;
  flex: none;
  align-items: center;
  justify-content: center;
  width: 22px;
  height: 21px;
  border: 1px solid ${({ $on }) => ($on ? "#c9a46c" : "transparent")};
  background: ${({ $on }) => ($on ? "linear-gradient(#fcc68a, #fdb768 45%, #fee9a8)" : "none")};
`;

const DropButton = styled.button`
  display: flex;
  flex: none;
  align-items: center;
  justify-content: center;
  gap: 5px;
  width: 36px;
  height: 21px;
`;

const Caret = styled.span`
  border: 3px solid transparent;
  border-top-color: #4b74b8;
  border-bottom: 0;
`;

const LabelButton = styled.button`
  display: flex;
  flex: none;
  align-items: center;
  gap: 3px;
  width: 60px;
  padding-left: 2px;
  color: #8c8c8c;
`;

const Workspace = styled.main`
  display: flex;
  flex: 1;
`;

const Panel = styled.aside`
  position: relative;
  z-index: 1;
  display: flex;
  flex-direction: column;
  flex: none;
  width: 155px;
  margin-top: -2px;
  border: 3px solid #ed1c24;
  background: #fff;
`;

const PanelHeader = styled.div`
  display: flex;
  align-items: center;
  height: 24px;
  padding: 0 2px;
  background: #b5cde9;
  color: #24477f;
  h2 {
    flex: 1;
    font-feature-settings: "palt";
  }
`;

const PanelTools = styled.div`
  display: flex;
  align-items: center;
  height: 24px;
  background: linear-gradient(#e3efff, #afd0ff);
`;

const TreeList = styled.ul`
  list-style: none;
`;

const TreeRow = styled.li`
  display: flex;
  align-items: center;
  height: 18px;
  padding-left: ${({ $child }) => ($child ? "38px" : "4px")};
  color: #000;
  white-space: nowrap;
  span {
    margin-left: 4px;
  }
`;

const Expander = styled.button`
  flex: none;
  width: 9px;
  height: 9px;
  border: 1px solid #8496ae;
  border-radius: 1px;
  background:
    linear-gradient(#1c3f8c, #1c3f8c) center / 5px 1px no-repeat,
    linear-gradient(#1c3f8c, #1c3f8c) center / ${({ $open }) => ($open ? "0 0" : "1px 5px")} no-repeat,
    #f6f8fb;
`;

const Dots = styled.i`
  flex: none;
  width: 6px;
  border-top: 1px dotted #777;
`;

const Selected = styled.span`
  position: relative;
  background: #f0f0f0;
  text-decoration: underline;
`;

const Pointer = styled.svg`
  position: absolute;
  top: -6px;
  left: -6px;
`;

const Document = styled.section`
  display: flex;
  flex-direction: column;
  flex: 1;
  min-width: 0;
  margin: 1px 0 3px 4px;
  padding: 0 2px 2px 0;
  border: 2px solid #9a9a9a;
  border-left: 2px solid #a9c6ee;
  border-top: 1px solid #6f9bdc;
  background: #a9c6ee;
`;

const Tabs = styled.div`
  display: flex;
  height: 20px;
  background: #d5e4f8;
  box-shadow: inset 0 -1px #a0a0a0;
`;

const Tab = styled.div`
  display: flex;
  align-items: center;
  gap: 4px;
  padding: 0 4px;
  background: ${({ $active }) => ($active ? "#fafafa" : "#efefef")};
  border-right: 1px solid #c9c9c9;
  color: #000;
  font-size: ${({ $compact }) => ($compact ? "11px" : "12px")};
  font-feature-settings: "palt";
  white-space: nowrap;
`;

const TabClose = styled.button`
  display: flex;
  align-items: center;
  justify-content: center;
  width: 12px;
  height: 12px;
  border: 1px solid ${({ $active }) => ($active ? "#e01b1b" : "#b9b9b9")};
  border-radius: 3px;
  background: ${({ $active }) => ($active ? "#ee1c1c" : "transparent")};
  color: ${({ $active }) => ($active ? "#fff" : "#a8a8a8")};
`;

const DocTools = styled.div`
  display: flex;
  align-items: center;
  height: 26px;
  padding-left: 3px;
  background: linear-gradient(#e3efff, #d3e4fd 45%, #aecbf6);
`;

const SettingButton = styled.button`
  height: 26px;
  padding: 0 4px;
  border: 3px solid #ed1c24;
  color: #24477f;
`;

const Canvas = styled.div`
  position: relative;
  flex: 1;
  min-height: 240px;
  border: 1px solid #e3e3e3;
  border-top-color: #6b6b6b;
  border-left-color: #6b6b6b;
  background: #fff;
`;

const Drawing = styled.svg`
  position: absolute;
  inset: 0;
  width: 100%;
  height: 100%;
  font-family: "DejaVu Sans Mono", monospace;
  font-size: 10px;
  .title {
    font-family: "Noto Sans CJK JP", sans-serif;
    font-size: 12px;
    fill: #000080;
  }
`;

const RightSide = styled.aside`
  display: flex;
  align-items: flex-start;
  flex: none;
  width: 57px;
  padding-left: 1px;
`;

const SideTab = styled.button`
  display: flex;
  flex-direction: column;
  align-items: center;
  gap: 8px;
  width: 20px;
  height: 99px;
  margin-top: 5px;
  padding-top: 2px;
  border: 1px solid #e6cf86;
  background: linear-gradient(90deg, #fff0b8, #ffdf7f);
  color: #6a6350;
  span {
    writing-mode: vertical-rl;
    text-orientation: sideways;
    font-feature-settings: "palt";
    line-height: 16px;
  }
`;

const SideTools = styled.div`
  display: flex;
  flex-direction: column;
  align-items: center;
  width: 34px;
  margin-top: 25px;
  padding: 4px 0;
  border-radius: 3px;
  background: linear-gradient(90deg, #e3efff, #d3e4fd 45%, #b4d0f8);
`;

const SideGrip = styled.span`
  width: 22px;
  height: 2px;
  margin-bottom: 8px;
  background: repeating-linear-gradient(90deg, #6f9bdc 0 2px, transparent 2px 4px);
`;

const OutputTab = styled.button`
  display: flex;
  align-items: center;
  align-self: flex-start;
  gap: 8px;
  width: 81px;
  height: 21px;
  margin: 0 0 1px 4px;
  padding-left: 3px;
  background: linear-gradient(#fff0b8, #ffdd77);
  color: #5f6470;
`;

const StatusBar = styled.footer`
  position: relative;
  display: flex;
  align-items: center;
  height: 21px;
  border-top: 1px solid #4f83c9;
  background: linear-gradient(#dce9fb, #c5dbf8 35%, #b0cdf4 40%, #c9defa);
  color: #24477f;
  p {
    flex: 1 1 0;
    height: 20px;
    border-right: 1px solid #8db2e3;
    padding-left: 4px;
  }
  p:first-child {
    flex: 1 1 17%;
  }
  &::after {
    content: "";
    width: 18px;
  }
`;

const SizeGrip = styled.svg`
  position: absolute;
  right: 0;
  bottom: 0;
`;
